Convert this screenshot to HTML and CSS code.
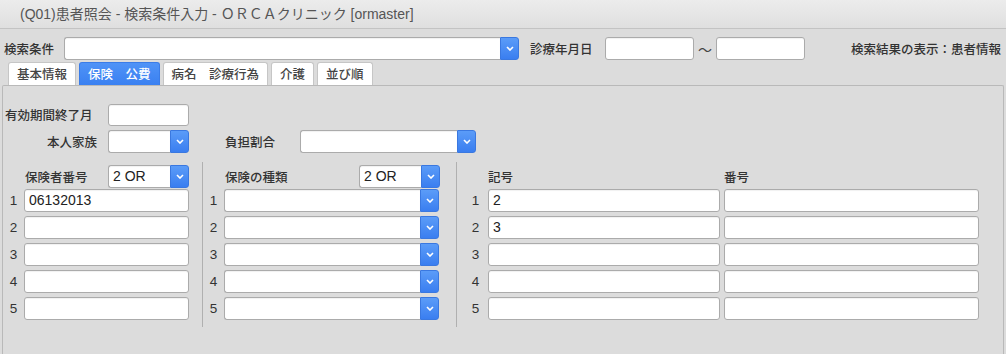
FILE: index.html
```html
<!DOCTYPE html>
<html lang="ja">
<head>
<meta charset="utf-8">
<title>患者照会</title>
<link rel="stylesheet" href="styles.css">
</head>
<body>
<div class="window">
  <header class="titlebar">(Q01)患者照会 - 検索条件入力 - ＯＲＣＡクリニック [ormaster]</header>

  <div class="searchbar">
    <span class="lbl l-search">検索条件</span>
    <div class="combo c-search"><div class="field"></div><span class="drop"><svg width="8" height="5" viewBox="0 0 8 5"><path d="M1 1l3 3 3-3" stroke="#fff" stroke-width="1.6" fill="none"/></svg></span></div>
    <span class="lbl l-date">診療年月日</span>
    <div class="field date"></div>
    <span class="tilde">〜</span>
    <div class="field date"></div>
    <span class="lbl result">検索結果の表示：患者情報</span>
  </div>

  <nav class="tabs">
    <span class="tab">基本情報</span>
    <span class="tab active">保険　公費</span>
    <span class="tab">病名　診療行為</span>
    <span class="tab">介護</span>
    <span class="tab">並び順</span>
  </nav>

  <section class="panel">
    <div class="row r-expire">
      <span class="lbl l-expire">有効期間終了月</span>
      <div class="field short"></div>
    </div>
    <div class="row r-family">
      <span class="lbl l-family">本人家族</span>
      <div class="combo short"><div class="field"></div><span class="drop"><svg width="8" height="5" viewBox="0 0 8 5"><path d="M1 1l3 3 3-3" stroke="#fff" stroke-width="1.6" fill="none"/></svg></span></div>
      <span class="lbl l-ratio">負担割合</span>
      <div class="combo c-ratio"><div class="field"></div><span class="drop"><svg width="8" height="5" viewBox="0 0 8 5"><path d="M1 1l3 3 3-3" stroke="#fff" stroke-width="1.6" fill="none"/></svg></span></div>
    </div>

    <div class="cols">
      <div class="col col1">
        <div class="colhead">
          <span class="lbl">保険者番号</span>
          <div class="combo short"><div class="field">2 OR</div><span class="drop"><svg width="8" height="5" viewBox="0 0 8 5"><path d="M1 1l3 3 3-3" stroke="#fff" stroke-width="1.6" fill="none"/></svg></span></div>
        </div>
        <div class="line"><span class="num">1</span><div class="field wide1">06132013</div></div>
        <div class="line"><span class="num">2</span><div class="field wide1"></div></div>
        <div class="line"><span class="num">3</span><div class="field wide1"></div></div>
        <div class="line"><span class="num">4</span><div class="field wide1"></div></div>
        <div class="line"><span class="num">5</span><div class="field wide1"></div></div>
      </div>

      <div class="col col2">
        <div class="colhead">
          <span class="lbl">保険の種類</span>
          <div class="combo short"><div class="field">2 OR</div><span class="drop"><svg width="8" height="5" viewBox="0 0 8 5"><path d="M1 1l3 3 3-3" stroke="#fff" stroke-width="1.6" fill="none"/></svg></span></div>
        </div>
        <div class="line"><span class="num">1</span><div class="combo wide2"><div class="field"></div><span class="drop"><svg width="8" height="5" viewBox="0 0 8 5"><path d="M1 1l3 3 3-3" stroke="#fff" stroke-width="1.6" fill="none"/></svg></span></div></div>
        <div class="line"><span class="num">2</span><div class="combo wide2"><div class="field"></div><span class="drop"><svg width="8" height="5" viewBox="0 0 8 5"><path d="M1 1l3 3 3-3" stroke="#fff" stroke-width="1.6" fill="none"/></svg></span></div></div>
        <div class="line"><span class="num">3</span><div class="combo wide2"><div class="field"></div><span class="drop"><svg width="8" height="5" viewBox="0 0 8 5"><path d="M1 1l3 3 3-3" stroke="#fff" stroke-width="1.6" fill="none"/></svg></span></div></div>
        <div class="line"><span class="num">4</span><div class="combo wide2"><div class="field"></div><span class="drop"><svg width="8" height="5" viewBox="0 0 8 5"><path d="M1 1l3 3 3-3" stroke="#fff" stroke-width="1.6" fill="none"/></svg></span></div></div>
        <div class="line"><span class="num">5</span><div class="combo wide2"><div class="field"></div><span class="drop"><svg width="8" height="5" viewBox="0 0 8 5"><path d="M1 1l3 3 3-3" stroke="#fff" stroke-width="1.6" fill="none"/></svg></span></div></div>
      </div>

      <div class="col col3">
        <div class="colhead">
          <span class="lbl h-kigo">記号</span>
          <span class="lbl h-bango">番号</span>
        </div>
        <div class="line"><span class="num">1</span><div class="field kigo">2</div><div class="field bango"></div></div>
        <div class="line"><span class="num">2</span><div class="field kigo">3</div><div class="field bango"></div></div>
        <div class="line"><span class="num">3</span><div class="field kigo"></div><div class="field bango"></div></div>
        <div class="line"><span class="num">4</span><div class="field kigo"></div><div class="field bango"></div></div>
        <div class="line"><span class="num">5</span><div class="field kigo"></div><div class="field bango"></div></div>
      </div>
    </div>
  </section>
</div>
</body>
</html>
```

FILE: styles.css
```css
* { box-sizing: border-box; }

html, body {
  margin: 0;
  padding: 0;
  background: #dcdcdc;
  height: 100%;
  overflow: hidden;
}

body {
  font-family: "Noto Sans CJK JP", "Liberation Sans", sans-serif;
  font-size: 12.5px;
  color: #333;
}

.window {
  display: flex;
  flex-direction: column;
  height: 100%;
}

.titlebar {
  height: 29px;
  line-height: 28px;
  padding-left: 20px;
  background: linear-gradient(#ececec, #dfdfdf);
  border-bottom: 1px solid #c3c3c3;
  color: #555;
  font-family: "Liberation Sans", "Noto Sans CJK JP", sans-serif;
  font-size: 14px;
  flex: none;
}

.lbl {
  font-family: "Noto Sans CJK JP", sans-serif;
  font-size: 12.5px;
  font-weight: 500;
  color: #333;
  white-space: nowrap;
  line-height: 16px;
}

.field {
  height: 23px;
  background: #fff;
  border: 1px solid #ababab;
  border-radius: 3px;
  box-shadow: inset 0 1px 1px rgba(0,0,0,0.06);
  font-family: "Liberation Sans", sans-serif;
  font-size: 14px;
  line-height: 21px;
  color: #222;
  padding-left: 4px;
}

.combo {
  display: flex;
  height: 23px;
}

.combo .field {
  flex: 1;
  border-radius: 3px 0 0 3px;
  border-right: none;
}

.drop {
  width: 19px;
  height: 23px;
  flex: none;
  display: flex;
  align-items: center;
  justify-content: center;
  background: linear-gradient(#5b9cf8, #3a7ef0);
  border: 1px solid #3a78e0;
  border-radius: 0 3px 3px 0;
}

/* search bar */
.searchbar {
  display: flex;
  align-items: center;
  height: 23px;
  margin-top: 8px;
  padding: 0 5px 0 4px;
  flex: none;
}

.l-search { width: 60px; }
.c-search { width: 455px; }
.l-date { margin-left: 11px; width: 75px; }
.date { width: 89px; }
.tilde {
  width: 22px;
  text-align: center;
  font-size: 14px;
  color: #444;
}
.result { margin-left: auto; }

/* tabs */
.tabs {
  display: flex;
  gap: 3px;
  height: 23px;
  margin-top: 2px;
  padding-left: 8px;
  flex: none;
}

.tab {
  height: 23px;
  padding: 0 8px;
  background: #fff;
  border: 1px solid #c6c6c6;
  border-bottom: none;
  border-radius: 3px 3px 0 0;
  line-height: 22px;
  color: #444;
  font-size: 12.5px;
  font-weight: 500;
}

.tab.active {
  background: linear-gradient(#4f93f7, #3a80f1);
  border-color: #3a7ce8;
  color: #fff;
}

/* panel */
.panel {
  flex: 1;
  margin: 0 2px;
  border: 1px solid #b9b9b9;
  border-bottom: none;
  border-radius: 2px 2px 0 0;
  background: #dcdcdc;
  padding: 18px 0 0 2px;
}

.row {
  display: flex;
  align-items: center;
}

.r-expire { height: 22px; }
.r-expire .field { height: 22px; }
.l-expire { width: 103px; }
.short { width: 81px; }

.r-family { height: 23px; margin-top: 4px; }
.l-family { width: 92px; text-align: right; margin-right: 11px; }
.l-ratio { margin-left: 36px; width: 75px; }
.c-ratio { width: 176px; }

/* columns */
.cols {
  display: flex;
  margin-top: 9px;
  margin-left: -2px;
}

.col {
  padding: 3px 0 7px;
  display: flex;
  flex-direction: column;
  gap: 4px;
}

.col1 { width: 199px; padding-right: 13px; }
.col2 { width: 254px; border-left: 1px solid #b0b0b0; padding-right: 16px; }
.col3 { border-left: 1px solid #b0b0b0; }

.colhead {
  display: flex;
  align-items: center;
  justify-content: space-between;
  height: 23px;
  margin-bottom: -3px;
}

.col1 .colhead { margin-left: 21px; padding-left: 1px; }
.col2 .colhead { margin-left: 21px; padding-left: 1px; }
.col3 .colhead { margin-left: 31px; justify-content: flex-start; }

.h-kigo { width: 236px; }

.line {
  display: flex;
  align-items: center;
  height: 23px;
}

.num {
  font-family: "Liberation Sans", sans-serif;
  font-size: 13.5px;
  color: #333;
  text-align: center;
  flex: none;
}

.col1 .num { width: 21px; }
.col2 .num { width: 21px; }
.col3 .num { width: 31px; padding-left: 6px; }

.wide1 { width: 165px; }
.wide2 { width: 215px; }
.kigo { width: 232px; }
.bango { width: 255px; margin-left: 4px; }
```
